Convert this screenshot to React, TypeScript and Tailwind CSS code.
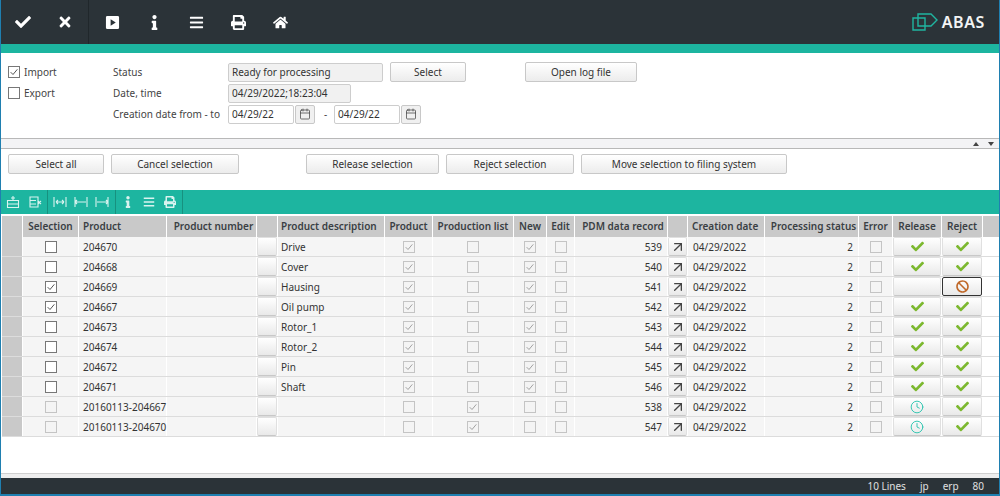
import type { ReactNode } from 'react'
import { ArrowUpRight, Calendar, Clock } from 'lucide-react'
import { FaBan, FaBars, FaCheck, FaHome, FaInfo, FaPrint, FaTimes } from 'react-icons/fa'

const GRID = 'grid grid-cols-[20px_55px_87px_89px_20px_106px_47px_80px_32px_27px_92px_19px_76px_93px_33px_48px_40px_1fr] gap-x-px'

type Row = {
  product: string
  desc: string
  selected: boolean
  enabled: boolean
  isProduct: boolean
  pdm: number
  release: 'ok' | 'wait' | 'none'
  reject: 'ok' | 'ban'
}

const rows: Row[] = [
  { product: '204670', desc: 'Drive', selected: false, enabled: true, isProduct: true, pdm: 539, release: 'ok', reject: 'ok' },
  { product: '204668', desc: 'Cover', selected: false, enabled: true, isProduct: true, pdm: 540, release: 'ok', reject: 'ok' },
  { product: '204669', desc: 'Hausing', selected: true, enabled: true, isProduct: true, pdm: 541, release: 'none', reject: 'ban' },
  { product: '204667', desc: 'Oil pump', selected: true, enabled: true, isProduct: true, pdm: 542, release: 'ok', reject: 'ok' },
  { product: '204673', desc: 'Rotor_1', selected: false, enabled: true, isProduct: true, pdm: 543, release: 'ok', reject: 'ok' },
  { product: '204674', desc: 'Rotor_2', selected: false, enabled: true, isProduct: true, pdm: 544, release: 'ok', reject: 'ok' },
  { product: '204672', desc: 'Pin', selected: false, enabled: true, isProduct: true, pdm: 545, release: 'ok', reject: 'ok' },
  { product: '204671', desc: 'Shaft', selected: false, enabled: true, isProduct: true, pdm: 546, release: 'ok', reject: 'ok' },
  { product: '20160113-204667', desc: '', selected: false, enabled: false, isProduct: false, pdm: 538, release: 'wait', reject: 'ok' },
  { product: '20160113-204670', desc: '', selected: false, enabled: false, isProduct: false, pdm: 547, release: 'wait', reject: 'ok' },
]

const headers = ['', 'Selection', 'Product', 'Product number', '', 'Product description', 'Product', 'Production list', 'New', 'Edit', 'PDM data record', '', 'Creation date', 'Processing status', 'Error', 'Release', 'Reject', '']
const headerAlign = ['', 'justify-center', 'pl-1', 'justify-center pl-1', '', 'pl-[3px]', 'justify-center', 'justify-center', 'justify-center', 'justify-center', 'justify-center pl-1', '', 'pl-1', 'justify-center pl-1', 'justify-center', 'justify-center', 'justify-center', '']

function Check({ checked, muted }: { checked: boolean; muted?: boolean }) {
  return (
    <span className={`flex h-3 w-3 items-center justify-center border ${muted ? 'border-[#c4c4c4] bg-[#f4f4f4]' : 'border-[#777] bg-white'}`}>
      {checked && (
        <svg viewBox="0 0 12 12" className="h-2.5 w-2.5" fill="none" stroke={muted ? '#9a9a9a' : '#444'} strokeWidth="1.1">
          <path d="M2 6.200 4.800 9 10 2.800" />
        </svg>
      )}
    </span>
  )
}

function Btn({ children, w }: { children: ReactNode; w: string }) {
  return (
    <button className={`${w} flex h-5 items-center justify-center rounded-[2px] border border-[#c8c8c8] bg-gradient-to-b from-white to-[#ececec] text-[10px] text-[#333]`}>
      {children}
    </button>
  )
}

function Field({ children, w, white }: { children: ReactNode; w: string; white?: boolean }) {
  return (
    <div className={`${w} flex h-[19px] items-center rounded-[2px] border border-[#cdcdcd] px-[3px] text-[10px] text-[#333] ${white ? 'bg-white' : 'bg-[#f1f1f1]'}`}>
      {children}
    </div>
  )
}

function CalendarBtn() {
  return (
    <button className="ml-px flex h-[19px] w-5 items-center justify-center rounded-[2px] border border-[#c8c8c8] bg-[#f0f0f0] text-[#444]">
      <Calendar className="h-3 w-3" strokeWidth={1.5} />
    </button>
  )
}

function Cell({ children, className = '' }: { children?: ReactNode; className?: string }) {
  return <div className={`flex h-[19px] items-center whitespace-nowrap bg-[#f5f5f5] pt-px text-[10px] text-[#333] ${className}`}>{children}</div>
}

function RaisedBtn({ children, outlined }: { children?: ReactNode; outlined?: boolean }) {
  return (
    <div className={`flex h-[19px] w-full items-center justify-center rounded-[2px] border bg-gradient-to-b from-white to-[#e9e9e9] ${outlined ? 'border-[#333]' : 'border-[#e0e0e0] border-b-[#c8c8c8]'}`}>
      {children}
    </div>
  )
}

function Logo() {
  return (
    <svg viewBox="0 0 26 18" className="h-[18px] w-[26px]" fill="none" stroke="#20b5a0" strokeWidth="1.400">
      <path d="M1 5h12v12H1z" />
      <path d="M6 1h13l6 6-6 6H6z" />
    </svg>
  )
}

function ToolIcon({ d }: { d: string }) {
  return (
    <svg viewBox="0 0 14 14" className="h-[14px] w-[14px]" fill="none" stroke="#d9f3ef" strokeWidth="1.100">
      <path d={d} />
    </svg>
  )
}

export default function App() {
  return (
    <div className="flex h-[496px] w-[1000px] flex-col overflow-hidden border-x border-b-2 border-[#1f7fb0] bg-white font-['Noto_Sans','Open_Sans',sans-serif]">
      <header className="flex h-11 shrink-0 items-center justify-between bg-[#2b3338] text-white">
        <div className="flex h-full items-center">
          <div className="flex h-full w-[88px] items-center gap-[26px] border-r border-[#20272b] pl-[14px]">
            <FaCheck className="h-4 w-4" />
            <FaTimes className="h-4 w-4" />
          </div>
          <div className="flex items-center gap-[27px] pl-[16px]">
            <svg viewBox="0 0 16 16" className="h-[15px] w-[15px]">
              <path fill="#fff" fillRule="evenodd" d="M2.500 1h11A1.500 1.500 0 0 1 15 2.500v11a1.500 1.500 0 0 1-1.500 1.500h-11A1.500 1.500 0 0 1 1 13.500v-11A1.500 1.500 0 0 1 2.500 1ZM6 4.500v7l5.500-3.500Z" />
            </svg>
            <FaInfo className="h-[15px] w-[15px]" />
            <FaBars className="h-[15px] w-[15px]" />
            <FaPrint className="h-[15px] w-[15px]" />
            <FaHome className="h-[15px] w-[15px]" />
          </div>
        </div>
        <div className="flex items-center gap-[4px] pr-[14px]">
          <Logo />
          <span className="text-[16px] font-semibold tracking-[0.6px] text-[#f2f4f4]">ABAS</span>
        </div>
      </header>
      <div className="h-[9px] shrink-0 bg-[#1db5a0]" />

      <section className="flex h-[85px] shrink-0 pt-[9px] pl-[7px]">
        <div className="flex w-[105px] flex-col gap-px">
          <label className="flex h-5 items-center gap-[4px] text-[10px] text-[#444]"><Check checked />Import</label>
          <label className="flex h-5 items-center gap-[4px] text-[10px] text-[#444]"><Check checked={false} />Export</label>
        </div>
        <div className="flex flex-col gap-px">
          <div className="flex h-5 items-center">
            <span className="w-[115px] text-[10px] text-[#444]">Status</span>
            <Field w="w-[155px]">Ready for processing</Field>
            <div className="ml-[7px]"><Btn w="w-[76px]">Select</Btn></div>
            <div className="ml-[59px]"><Btn w="w-[112px]">Open log file</Btn></div>
          </div>
          <div className="flex h-5 items-center">
            <span className="w-[115px] text-[10px] text-[#444]">Date, time</span>
            <Field w="w-[123px]">04/29/2022;18:23:04</Field>
          </div>
          <div className="flex h-5 items-center">
            <span className="w-[115px] whitespace-nowrap text-[10px] text-[#444]">Creation date from - to</span>
            <Field w="w-[66px]" white>04/29/22</Field>
            <CalendarBtn />
            <span className="w-[19px] pl-[2px] text-center text-[10px] text-[#444]">-</span>
            <Field w="w-[66px]" white>04/29/22</Field>
            <CalendarBtn />
          </div>
        </div>
      </section>

      <div className="flex h-[11px] shrink-0 items-center justify-end gap-[9px] border-y border-[#b8b8b8] bg-[#f3f3f5] pr-[5px]">
        <span className="h-0 w-0 border-x-[3px] border-b-[4px] border-x-transparent border-b-[#444]" />
        <span className="h-0 w-0 border-x-[3px] border-t-[4px] border-x-transparent border-t-[#444]" />
      </div>

      <div className="flex h-[41px] shrink-0 items-start pt-[5px] pl-[7px]">
        <Btn w="w-[96px]">Select all</Btn>
        <div className="ml-[7px]"><Btn w="w-[128px]">Cancel selection</Btn></div>
        <div className="ml-[67px]"><Btn w="w-[133px]">Release selection</Btn></div>
        <div className="ml-[7px]"><Btn w="w-[128px]">Reject selection</Btn></div>
        <div className="ml-[7px]"><Btn w="w-[206px]">Move selection to filing system</Btn></div>
      </div>

      <div className="flex h-6 shrink-0 items-center bg-[#1db5a0] text-[#d9f3ef]">
        <div className="flex h-full items-center gap-[8px] border-r border-[#17917f] pr-[5px] pl-[5px]">
          <ToolIcon d="M1.500 5.500h11v7h-11zM7 1v5M5 3h4M1.500 9h11" />
          <ToolIcon d="M2 2h8v10H2zM2 5.500h6M2 9h6M10 6l3 3M13 6l-3 3" />
        </div>
        <div className="flex h-full items-center gap-[7px] border-r border-[#17917f] pr-[6px] pl-[5px]">
          <ToolIcon d="M1 2v10M13 2v10M3 7h8M3 7l2-2M3 7l2 2M11 7 9 5M11 7 9 9" />
          <ToolIcon d="M1 2v10M13 2v10M1 7h11M1 7l2-2M1 7l2 2" />
          <ToolIcon d="M1 2v10M13 2v10M2 7h11M13 7l-2-2M13 7l-2 2" />
        </div>
        <div className="flex h-full items-center gap-[9px] border-r border-[#17917f] px-[6px]">
          <FaInfo className="h-3 w-3" />
          <FaBars className="h-3 w-3" />
          <FaPrint className="h-3 w-3" />
        </div>
      </div>

      <main className="min-h-0 flex-1 pl-[1px]">
        <div className={`${GRID} h-[23px] pt-[2px]`}>
          {headers.map((h, i) => (
            <div
              key={i}
              className={`flex h-[21px] items-center whitespace-nowrap bg-[#c9c9c9] text-[10px] font-semibold text-[#3a3f44] ${headerAlign[i]}`}
            >
              {h}
            </div>
          ))}
        </div>
        {rows.map((r) => (
          <div key={r.pdm} className={`${GRID} h-5 border-b border-[#dcdcdc]`}>
            <div className="h-[19px] bg-[#c9c9c9]" />
            <Cell className="justify-center"><Check checked={r.selected} muted={!r.enabled} /></Cell>
            <Cell className="pl-[4px]">{r.product}</Cell>
            <Cell />
            <RaisedBtn />
            <Cell className="pl-[3px]">{r.desc}</Cell>
            <Cell className="justify-center"><Check checked={r.isProduct} muted /></Cell>
            <Cell className="justify-center"><Check checked={!r.isProduct} muted /></Cell>
            <Cell className="justify-center"><Check checked={r.isProduct} muted /></Cell>
            <Cell className="justify-center"><Check checked={false} muted /></Cell>
            <Cell className="justify-end pr-[5px]">{r.pdm}</Cell>
            <RaisedBtn><ArrowUpRight className="h-4 w-4 text-[#444]" strokeWidth={2} /></RaisedBtn>
            <Cell className="pl-[5px]">04/29/2022</Cell>
            <Cell className="justify-end pr-[5px]">2</Cell>
            <Cell className="justify-center"><Check checked={false} muted /></Cell>
            <RaisedBtn>
              {r.release === 'ok' && <FaCheck className="h-[13px] w-[13px] text-[#7cb82f]" />}
              {r.release === 'wait' && <Clock className="h-[14px] w-[14px] text-[#2cc4ae]" strokeWidth={1.6} />}
            </RaisedBtn>
            <RaisedBtn outlined={r.reject === 'ban'}>
              {r.reject === 'ok' ? <FaCheck className="h-[13px] w-[13px] text-[#7cb82f]" /> : <FaBan className="h-[13px] w-[13px] text-[#c0692a]" />}
            </RaisedBtn>
            <div className="bg-white" />
          </div>
        ))}
      </main>

      <div className="h-[5px] shrink-0 border-t border-[#d0d0d0] bg-[#eeeeee]" />
      <footer className="flex h-4 shrink-0 items-center justify-end gap-[14px] bg-[#2b3338] pr-[15px] text-[10px] text-[#e0e0e0]">
        <span>10 Lines</span>
        <span>jp</span>
        <span>erp</span>
        <span>80</span>
      </footer>
    </div>
  )
}
